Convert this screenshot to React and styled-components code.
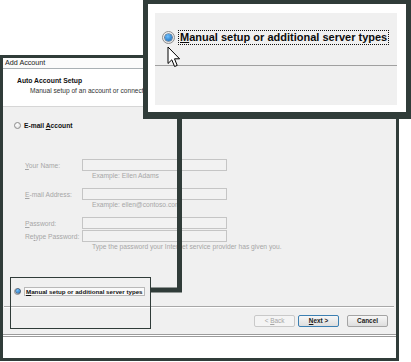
import React from "react";
import styled, { createGlobalStyle } from "styled-components";

const dark = "#303c39";

const Global = createGlobalStyle`
  html, body { margin: 0; padding: 0; background: #fff; }
  body { font-family: "Liberation Sans", Arial, sans-serif; }
`;

const Page = styled.div`
  position: relative;
  width: 411px;
  height: 362px;
  overflow: hidden;
  background: #fff;
`;

const DialogFrame = styled.div`
  box-sizing: border-box;
  margin-top: 55px;
  width: 399px;
  height: 306px;
  border: 3px solid ${dark};
  display: flex;
  flex-direction: column;
  background: #fff;
`;

const TitleBar = styled.div`
  height: 10px;
  line-height: 10px;
  padding-left: 2px;
  font-size: 7.2px;
  color: #222;
  background: linear-gradient(90deg, #fbfbfb 60%, #eeeeee);
  border-bottom: 1px solid #a9b0b4;
`;

const Header = styled.div`
  box-sizing: border-box;
  height: 38px;
  padding: 7px 0 0 14px;
  background: #fff;
  border-bottom: 1px solid #d6d6d6;
`;

const HeaderTitle = styled.div`
  font-size: 6.8px;
  font-weight: bold;
  line-height: 10px;
  color: #111;
`;

const HeaderSub = styled.div`
  font-size: 6.6px;
  line-height: 10px;
  padding-left: 13px;
  color: #333;
`;

const Body = styled.div`
  box-sizing: border-box;
  height: 227px;
  background: #f0f0f0;
  display: flex;
  flex-direction: column;
  padding: 13px 0 7px 0;
`;

const RadioRow = styled.div`
  display: flex;
  align-items: center;
  gap: 3px;
  height: 10px;
  padding-left: 11px;
  margin-top: ${(p) => p.$mt || 0}px;
  font-size: 6.7px;
  font-weight: bold;
  color: #111;
`;

const Radio = styled.span`
  box-sizing: border-box;
  display: inline-flex;
  align-items: center;
  justify-content: center;
  width: ${(p) => p.$size}px;
  height: ${(p) => p.$size}px;
  border-radius: 50%;
  border: 1px solid #8d8d8d;
  background: radial-gradient(circle at 40% 35%, #ffffff, #dadada);
  flex: none;
  &::after {
    content: "";
    display: ${(p) => (p.$checked ? "block" : "none")};
    width: ${(p) => Math.round(p.$size * 0.5)}px;
    height: ${(p) => Math.round(p.$size * 0.5)}px;
    border-radius: 50%;
    background: radial-gradient(circle at 40% 35%, #6fc1ff, #0d5fae);
    box-shadow: 0 0 0 0.6px #1b3f66;
  }
`;

const Form = styled.div`
  display: flex;
  flex-direction: column;
  padding-left: 22px;
  margin-top: ${(p) => p.$mt}px;
`;

const FieldRow = styled.div`
  display: grid;
  grid-template-columns: 57px 145px;
  align-items: center;
  height: 12px;
  margin-top: ${(p) => p.$mt || 0}px;
`;

const Label = styled.span`
  font-size: 6.7px;
  color: #a6a6a6;
  white-space: nowrap;
`;

const Input = styled.div`
  box-sizing: border-box;
  height: 12px;
  border: 1px solid #c5c5c5;
  background: #f2f2f2;
`;

const Hint = styled.div`
  height: 10px;
  line-height: 10px;
  padding-left: 67px;
  font-size: 6.7px;
  color: #a6a6a6;
  white-space: nowrap;
`;

const SelText = styled.span`
  box-sizing: border-box;
  height: 9px;
  line-height: 7px;
  padding: 0 1px;
  border: 1px solid #b9b9b9;
  background: #fafafa;
  font-size: 6.2px;
  font-weight: bold;
  color: #111;
  white-space: nowrap;
`;

const Separator = styled.div`
  height: 1px;
  margin: ${(p) => p.$mt}px 2px 0 1px;
  background: #a8a8a8;
  border-bottom: 1px solid #fff;
`;

const ButtonBar = styled.div`
  display: flex;
  justify-content: flex-end;
  gap: 3px;
  margin-top: 7px;
  padding-right: 8px;
`;

const Button = styled.div`
  box-sizing: border-box;
  width: 41px;
  height: 12px;
  line-height: 10px;
  text-align: center;
  font-size: 6.4px;
  font-weight: ${(p) => (p.$disabled ? "normal" : "bold")};
  color: ${(p) => (p.$disabled ? "#a5a5a5" : "#1a1a1a")};
  border: 1px solid ${(p) => (p.$primary ? "#3c7fb1" : p.$disabled ? "#c9c9c9" : "#a4a4a4")};
  border-radius: 2px;
  background: ${(p) =>
    p.$disabled ? "#f4f4f4" : "linear-gradient(#f7f7f7, #dedede)"};
  margin-left: ${(p) => p.$gap || 0}px;
`;

const BottomStrip = styled.div`
  flex: 1;
  border-top: 3px double #9b9b9b;
  background: #fff;
`;

const Callout = styled.div`
  position: absolute;
  left: 143px;
  top: 0;
  box-sizing: border-box;
  width: 268px;
  height: 119px;
  border: 5px solid ${dark};
  border-top-width: 4px;
  border-bottom-width: 7px;
  background: #fff;
  padding: 9px 9px 7px 7px;
`;

const CalloutPanel = styled.div`
  height: 100%;
  background: #f0f0f0;
  display: flex;
  flex-direction: column;
`;

const CalloutRow = styled.div`
  display: flex;
  align-items: center;
  gap: 3px;
  height: 15px;
  margin-top: 17px;
  padding-left: 7px;
`;

const FocusText = styled.span`
  font-size: 11px;
  font-weight: bold;
  color: #0c0c0c;
  line-height: 13px;
  border: 1px dotted #111;
  padding: 0 1px;
  white-space: nowrap;
`;

const CalloutLine = styled.div`
  height: 1px;
  margin-top: 20px;
  background: #a0a0a0;
`;

const Overlay = styled.svg`
  position: absolute;
  left: 0;
  top: 0;
  pointer-events: none;
`;

const Cursor = styled.svg`
  position: absolute;
  left: 167px;
  top: 46px;
`;

const HighlightBox = styled.div`
  position: absolute;
  left: 10px;
  top: 277px;
  width: 139px;
  height: 50px;
  border: 1px solid ${dark};
`;

export default function App() {
  return (
    <Page>
      <Global />
      <DialogFrame>
        <TitleBar>Add Account</TitleBar>
        <Header>
          <HeaderTitle>Auto Account Setup</HeaderTitle>
          <HeaderSub>Manual setup of an account or connect to other server types.</HeaderSub>
        </Header>
        <Body>
          <RadioRow>
            <Radio $size={7} />
            <span>E-mail <u>A</u>ccount</span>
          </RadioRow>
          <Form $mt={29}>
            <FieldRow>
              <Label><u>Y</u>our Name:</Label>
              <Input />
            </FieldRow>
            <Hint>Example: Ellen Adams</Hint>
            <FieldRow $mt={7}>
              <Label><u>E</u>-mail Address:</Label>
              <Input />
            </FieldRow>
            <Hint>Example: ellen@contoso.com</Hint>
            <FieldRow $mt={7}>
              <Label><u>P</u>assword:</Label>
              <Input />
            </FieldRow>
            <FieldRow $mt={1}>
              <Label>Re<u>t</u>ype Password:</Label>
              <Input />
            </FieldRow>
            <Hint>Type the password your Internet service provider has given you.</Hint>
          </Form>
          <RadioRow $mt={34}>
            <Radio $size={7} $checked />
            <SelText><u>M</u>anual setup or additional server types</SelText>
          </RadioRow>
          <Separator $mt={10} />
          <ButtonBar>
            <Button $disabled>&lt; <u>B</u>ack</Button>
            <Button $primary><u>N</u>ext &gt;</Button>
            <Button $gap={5}>Cancel</Button>
          </ButtonBar>
        </Body>
        <BottomStrip />
      </DialogFrame>

      <Callout>
        <CalloutPanel>
          <CalloutRow>
            <Radio $size={13} $checked />
            <FocusText><u>M</u>anual setup or additional server types</FocusText>
          </CalloutRow>
          <CalloutLine />
        </CalloutPanel>
      </Callout>

      <Cursor width="14" height="23" viewBox="0 0 14 23">
        <path
          d="M1 1 L1 17.5 L4.8 13.8 L7.6 20.5 L10.2 19.4 L7.5 12.8 L12.6 12.8 Z"
          fill="#fff"
          stroke="#000"
          strokeWidth="1"
          strokeLinejoin="miter"
        />
      </Cursor>

      <Overlay width="411" height="362" viewBox="0 0 411 362">
        <polyline
          points="179.5,117 179.5,290 150,290"
          fill="none"
          stroke={dark}
          strokeWidth="5"
        />
      </Overlay>
      <HighlightBox />
    </Page>
  );
}
